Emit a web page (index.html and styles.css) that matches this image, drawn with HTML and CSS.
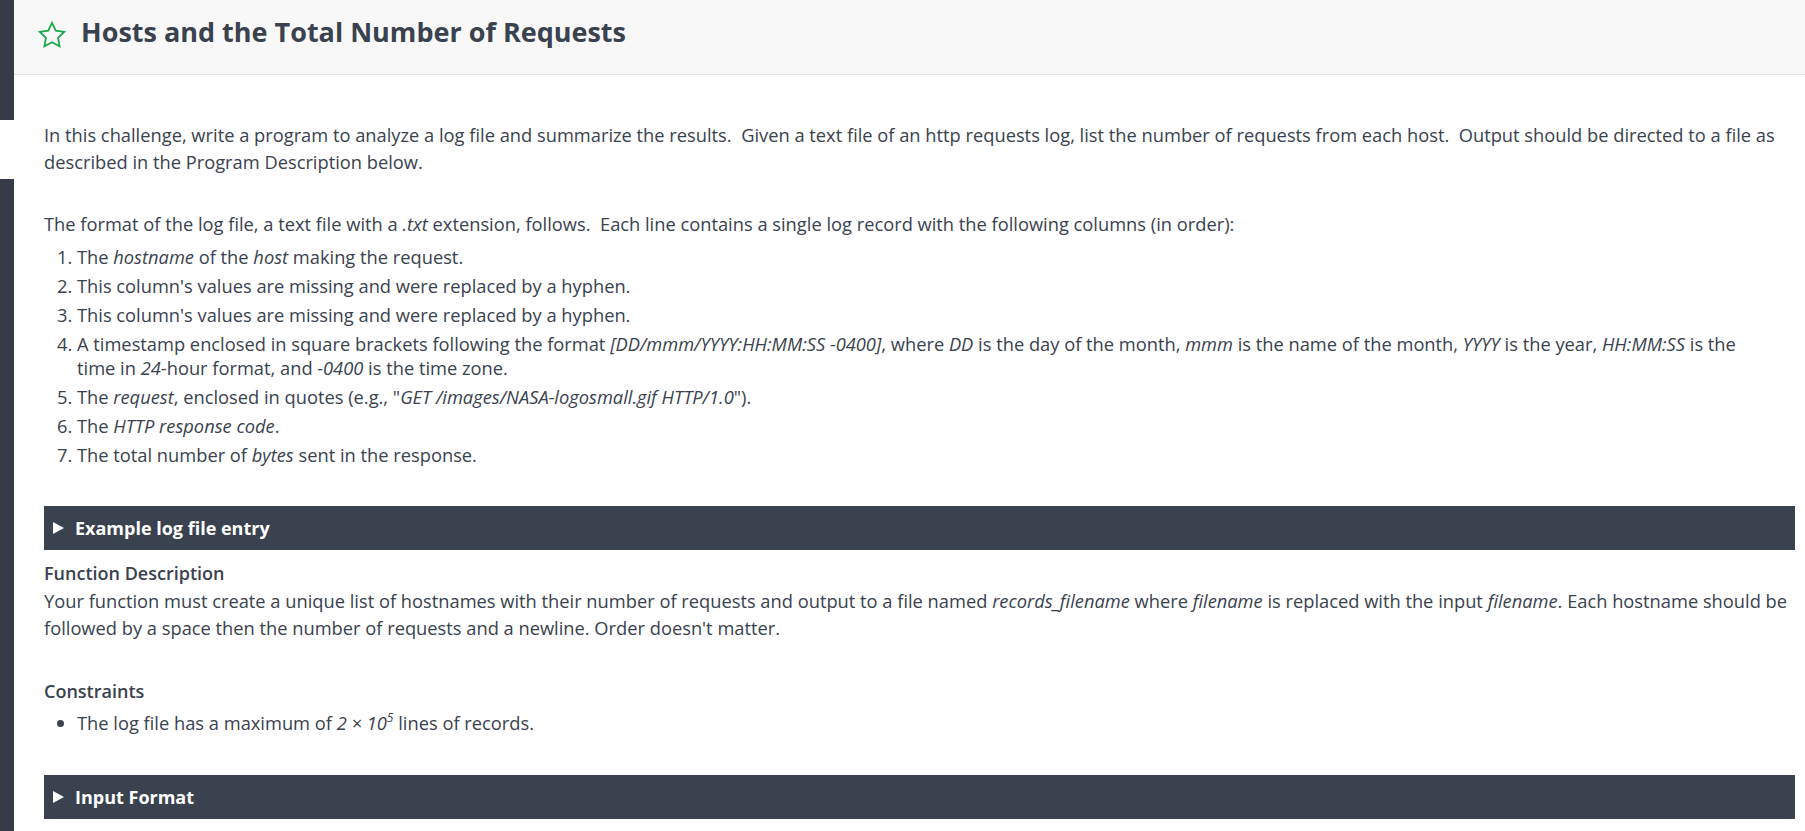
FILE: index.html
```html
<!DOCTYPE html>
<html lang="en">
<head>
<meta charset="utf-8">
<title>Hosts and the Total Number of Requests</title>
<link rel="stylesheet" href="styles.css">
</head>
<body>
<div class="page">
  <aside class="rail">
    <div class="rail-top"></div>
    <div class="rail-gap"></div>
    <div class="rail-bottom"></div>
  </aside>
  <main class="main">
    <header class="header">
      <svg class="star" width="30" height="28" viewBox="0 0 24 23" aria-hidden="true">
        <path d="M12 1.6l3.1 6.3 6.9 1-5 4.9 1.2 6.9-6.2-3.3-6.2 3.3 1.2-6.9-5-4.9 6.9-1z" fill="none" stroke="#1ba94c" stroke-width="1.5" stroke-linejoin="miter"/>
      </svg>
      <h1 class="title">Hosts and the Total Number of Requests</h1>
    </header>
    <section class="content">
      <p class="para">In this challenge, write a program to analyze a log file and summarize the results.&nbsp; Given a text file of an http requests log, list the number of requests from each host.&nbsp; Output should be directed to a file as described in the Program Description below.</p>
      <p class="para gap-top">The format of the log file, a text file with a <em>.txt</em> extension, follows.&nbsp; Each line contains a single log record with the following columns (in order):</p>
      <ol class="cols">
        <li>The <em>hostname</em> of the <em>host</em> making the request.</li>
        <li>This column's values are missing and were replaced by a hyphen.</li>
        <li>This column's values are missing and were replaced by a hyphen.</li>
        <li>A timestamp enclosed in square brackets following the format <em>[DD/mmm/YYYY:HH:MM:SS -0400]</em>, where <em>DD</em> is the day of the month, <em>mmm</em> is the name of the month, <em>YYYY</em> is the year, <em>HH:MM:SS</em> is the time&nbsp;in <em>24</em>-hour format, and <em>-0400</em> is the time zone.</li>
        <li>The <em>request</em>, enclosed in quotes (e.g., "<em>GET /images/NASA-logosmall.gif HTTP/1.0</em>").</li>
        <li>The <em>HTTP response code</em>.</li>
        <li>The total number of <em>bytes</em> sent in the response.</li>
      </ol>
      <div class="toggle toggle-example">
        <svg class="tri" width="11" height="12" viewBox="0 0 11 12" aria-hidden="true"><path d="M0 0L11 6L0 12z" fill="#ffffff"/></svg>
        <span>Example log file entry</span>
      </div>
      <h3 class="subhead">Function Description</h3>
      <p class="para">Your function must create a unique list of hostnames with their number of requests and output to a file named <em>records_filename</em> where <em>filename</em> is replaced with the input <em>filename</em>. Each hostname should be followed by a space then the number of requests and a newline. Order doesn't matter.</p>
      <h3 class="subhead constraints">Constraints</h3>
      <ul class="bullets">
        <li>The log file has a maximum of <em>2 × 10<sup>5</sup></em> lines of records.</li>
      </ul>
      <div class="toggle toggle-input">
        <svg class="tri" width="11" height="12" viewBox="0 0 11 12" aria-hidden="true"><path d="M0 0L11 6L0 12z" fill="#ffffff"/></svg>
        <span>Input Format</span>
      </div>
    </section>
  </main>
</div>
</body>
</html>
```
FILE: styles.css
```css
html, body {
  margin: 0;
  padding: 0;
  background: #ffffff;
}

body {
  font-family: "Open Sans", "Noto Sans", sans-serif;
  color: #39424e;
  font-size: 18.3px;
  overflow: hidden;
}

.page {
  display: flex;
  min-height: 831px;
}

.rail {
  width: 14px;
  flex: 0 0 14px;
  display: flex;
  flex-direction: column;
}

.rail-top {
  height: 120px;
  background: #353b47;
}

.rail-gap {
  height: 59px;
  background: #ffffff;
}

.rail-bottom {
  flex: 1;
  background: #353b47;
}

.main {
  flex: 1;
  min-width: 0;
}

.header {
  height: 60px;
  background: #f8f8f8;
  border-bottom: 1px solid #e2e2e2;
  display: flex;
  align-items: flex-start;
  padding: 14px 0 0 23px;
  gap: 14px;
}

.star {
  display: block;
  margin-top: 7px;
}

.title {
  margin: 0;
  font-size: 27px;
  font-weight: 700;
  line-height: 36px;
  color: #39424e;
}

.content {
  padding: 46px 10px 0 30px;
}

.para {
  margin: 0;
  line-height: 27px;
}

.gap-top {
  margin-top: 35px;
}

em {
  font-style: italic;
}

.cols {
  margin: 8px 0 0 0;
  padding-left: 33px;
}

.cols li {
  line-height: 24px;
  margin-bottom: 5px;
}

.cols li:last-child {
  margin-bottom: 0;
}

.toggle {
  height: 44px;
  background: #39424e;
  color: #ffffff;
  display: flex;
  align-items: center;
  padding-left: 9px;
  gap: 11px;
  font-size: 18px;
  font-weight: 700;
}

.toggle-example {
  margin-top: 39px;
}

.toggle-input {
  margin-top: 40px;
}

.tri {
  display: block;
}

.subhead {
  margin: 10px 0 0 0;
  font-size: 18px;
  font-weight: 600;
  line-height: 27px;
}

.constraints {
  margin-top: 37px;
}

.bullets {
  margin: 6px 0 0 0;
  padding-left: 33px;
}

.bullets li {
  line-height: 24px;
}

sup {
  font-size: 12px;
  line-height: 0;
  vertical-align: 8px;
}
```
